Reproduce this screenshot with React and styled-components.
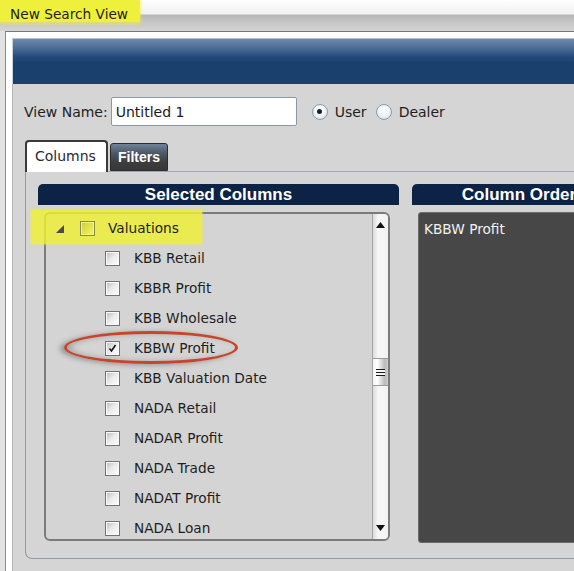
import React from 'react';
import styled, { createGlobalStyle } from 'styled-components';

const Global = createGlobalStyle`
  html, body { margin: 0; padding: 0; }
  body {
    background: #e2e2e2;
    font-family: "DejaVu Sans", Verdana, sans-serif;
    overflow: hidden;
  }
`;

const Screen = styled.div`
  width: 574px;
  height: 571px;
  overflow: hidden;
  background: #e2e2e2;
`;

const TitleBar = styled.div`
  height: 31px;
  display: flex;
  align-items: flex-start;
  background: linear-gradient(
    to bottom,
    #fefefe 0px,
    #f1f1f1 14px,
    #b6b6b6 15px,
    #c6c6c6 22px,
    #d4d4d4 31px
  );
`;

const TitleMark = styled.div`
  box-sizing: border-box;
  height: 22px;
  padding: 7px 12px 0 10px;
  line-height: 15px;
  font-size: 13.7px;
  color: #1e1e1e;
  background: #eff03c;
  box-shadow: 0 1px 3px 1px rgba(236, 238, 60, 0.65);
`;

const Frame = styled.div`
  margin-left: 5px;
  width: 900px;
  height: 600px;
  box-sizing: border-box;
  border-top: 1px solid #767676;
  border-left: 1px solid #8a8a8a;
  background: #ffffff;
  padding: 6px 0 0 6px;
`;

const BlueBand = styled.div`
  height: 46px;
  box-sizing: border-box;
  border-top: 1px solid #b7c4d2;
  border-left: 1px solid #c9d2dc;
  background: linear-gradient(
    to bottom,
    #6e8aac 0px,
    #4f7098 8px,
    #24497a 18px,
    #1a416d 24px,
    #1a416d 100%
  );
`;

const Content = styled.div`
  height: 520px;
  box-sizing: border-box;
  background: #d5d5d5;
  border-left: 1px solid #b4b4b4;
  padding: 13px 0 0 11px;
`;

const NameRow = styled.div`
  display: flex;
  align-items: center;
  height: 29px;
  font-size: 14px;
  color: #1e1e1e;
`;

const Label = styled.span`
  margin-right: 3px;
`;

const NameInput = styled.div`
  box-sizing: border-box;
  width: 186px;
  height: 29px;
  border: 1px solid #8b98a6;
  border-radius: 2px;
  background: #ffffff;
  padding-left: 4px;
  display: flex;
  align-items: center;
  color: #1a1a1a;
`;

const RadioGroup = styled.div`
  display: flex;
  align-items: center;
  margin-left: 15px;
`;

const Radio = styled.span`
  box-sizing: border-box;
  width: 16px;
  height: 16px;
  border-radius: 50%;
  border: 1px solid #8b9db2;
  background: radial-gradient(circle at 50% 40%, #ffffff 0%, #f3f5f9 45%, #c7d1de 100%);
  display: inline-flex;
  align-items: center;
  justify-content: center;
  &::after {
    content: '';
    width: 5px;
    height: 5px;
    border-radius: 50%;
    background: ${(p) => (p.$checked ? '#1e1e1e' : 'transparent')};
  }
`;

const RadioLabel = styled.span`
  margin: 0 9px 0 7px;
`;

const TabRow = styled.div`
  display: flex;
  align-items: flex-end;
  margin-top: 14px;
  padding-left: 1px;
  height: 32px;
  position: relative;
  z-index: 1;
  margin-bottom: -1px;
`;

const Tab = styled.div`
  box-sizing: border-box;
  display: flex;
  align-items: center;
  ${(p) =>
    p.$active
      ? `
    width: 83px;
    height: 32px;
    padding: 0 0 2px 8px;
    background: #ffffff;
    border: 2px solid #3a3a3a;
    border-bottom: none;
    border-radius: 4px 4px 0 0;
    color: #2a2a2a;
    font-size: 14px;
  `
      : `
    width: 58px;
    height: 28px;
    margin-left: 2px;
    margin-bottom: 1px;
    padding-left: 7px;
    background: linear-gradient(to bottom, #6f8399 0px, #4d5966 9px, #3d3d3d 18px, #383838 100%);
    border: 1px solid #2c2c2c;
    border-radius: 3px 3px 0 0;
    color: #ffffff;
    font-family: "Liberation Sans", Arial, sans-serif;
    font-weight: bold;
    font-size: 14px;
  `}
`;

const TabPanel = styled.div`
  box-sizing: border-box;
  height: 388px;
  margin-left: 1px;
  border-top: 1px solid #9ca8b4;
  border-left: 1px solid #8d9aa7;
  border-bottom: 1px solid #8d9aa7;
  border-bottom-left-radius: 7px;
  padding: 12px 0 0 12px;
  display: flex;
  gap: 13px;
`;

const Column = styled.div`
  width: ${(p) => p.$width}px;
  flex-shrink: 0;
  display: flex;
  flex-direction: column;
`;

const Header = styled.div`
  height: 21px;
  background: #0d2346;
  border-radius: 5px 5px 0 0;
  color: #ffffff;
  font-family: "Liberation Sans", Arial, sans-serif;
  font-weight: bold;
  font-size: 17px;
  line-height: 21px;
  text-align: center;
  white-space: nowrap;
`;

const ListBox = styled.div`
  position: relative;
  box-sizing: border-box;
  height: 329px;
  margin: 7px 9px 0 6px;
  border: 2px solid #7b7b7b;
  border-radius: 6px;
  background: #d4d4d4;
  display: flex;
`;

const Rows = styled.div`
  position: relative;
  z-index: 1;
  flex: 1;
  overflow: hidden;
  margin-top: -1px;
`;

const Row = styled.div`
  height: 30px;
  display: flex;
  align-items: center;
  font-size: 13.7px;
  color: #1e1e1e;
  padding-left: ${(p) => (p.$child ? 59 : 10)}px;
  gap: ${(p) => (p.$child ? 14 : 0)}px;
  white-space: nowrap;
`;

const Expander = styled.span`
  display: inline-flex;
  width: 8px;
  margin: 1px 16px 0 0;
`;

const Check = styled.span`
  box-sizing: border-box;
  width: 15px;
  height: 15px;
  margin-right: ${(p) => (p.$yellow ? 13 : 0)}px;
  border: 1px solid ${(p) => (p.$yellow ? '#8a8a52' : '#737373')};
  background: ${(p) =>
    p.$yellow
      ? 'linear-gradient(135deg, #c9ca3a 0%, #e6e852 60%, #f2f36a 100%)'
      : 'linear-gradient(135deg, #b9b9b9 0%, #e9e9e9 45%, #ffffff 100%)'};
  box-shadow: inset 0 0 0 1px ${(p) => (p.$yellow ? '#f6f67c' : '#fafafa')};
  display: inline-flex;
  align-items: center;
  justify-content: center;
`;

const Scrollbar = styled.div`
  position: relative;
  z-index: 1;
  width: 15px;
  border-left: 1px solid #a4a4a4;
  border-radius: 0 4px 4px 0;
  background: linear-gradient(to right, #dcdcdc 0%, #f7f7f7 35%, #f1f1f1 100%);
  display: flex;
  flex-direction: column;
`;

const ScrollButton = styled.div`
  height: 22px;
  display: flex;
  align-items: center;
  justify-content: center;
`;

const Track = styled.div`
  flex: 1;
`;

const Thumb = styled.div`
  box-sizing: border-box;
  height: 28px;
  margin-top: ${(p) => p.$offset}px;
  border-top: 1px solid #9a9a9a;
  border-bottom: 1px solid #9a9a9a;
  background: linear-gradient(to right, #f4f4f4 0%, #ffffff 30%, #b9b9b9 80%, #cfcfcf 100%);
  display: flex;
  align-items: center;
  justify-content: center;
`;

const Grip = styled.span`
  width: 9px;
  height: 7px;
  background: repeating-linear-gradient(to bottom, #1c1c1c 0 1px, #f4f4f4 1px 3px);
`;

const OrderPanel = styled.div`
  box-sizing: border-box;
  height: 331px;
  margin: 7px 0 0 6px;
  border: 1px solid #6c6c6c;
  border-radius: 3px 0 0 3px;
  background: #474747;
  padding: 8px 5px;
  color: #f2f2f2;
  font-size: 13.7px;
  line-height: 16px;
`;

const Highlight = styled.div`
  position: absolute;
  z-index: 0;
  left: -15px;
  top: -4px;
  width: 171px;
  height: 34px;
  background: rgba(238, 240, 52, 0.82);
  box-shadow: 0 0 2px 1px rgba(238, 240, 52, 0.5);
  pointer-events: none;
`;

const RedRing = styled.div`
  position: absolute;
  z-index: 2;
  left: 18px;
  top: 117px;
  width: 174px;
  height: 33px;
  box-sizing: border-box;
  border: 3px solid #c5472b;
  border-radius: 50%;
  box-shadow: -4px 1px 5px rgba(70, 70, 70, 0.45), inset 5px 0 5px rgba(70, 70, 70, 0.28);
  pointer-events: none;
`;

const items = [
  'KBB Retail',
  'KBBR Profit',
  'KBB Wholesale',
  'KBBW Profit',
  'KBB Valuation Date',
  'NADA Retail',
  'NADAR Profit',
  'NADA Trade',
  'NADAT Profit',
  'NADA Loan',
];

const Tick = () => (
  <svg width="9" height="9" viewBox="0 0 9 9">
    <path d="M1.5 4.5 L3.5 7 L7.5 1" fill="none" stroke="#111" strokeWidth="1.6" />
  </svg>
);

export default function App() {
  return (
    <>
      <Global />
      <Screen>
        <TitleBar>
          <TitleMark>New Search View</TitleMark>
        </TitleBar>
        <Frame>
          <BlueBand />
          <Content>
            <NameRow>
              <Label>View Name:</Label>
              <NameInput>Untitled 1</NameInput>
              <RadioGroup>
                <Radio $checked />
                <RadioLabel>User</RadioLabel>
                <Radio />
                <RadioLabel>Dealer</RadioLabel>
              </RadioGroup>
            </NameRow>
            <TabRow>
              <Tab $active>Columns</Tab>
              <Tab>Filters</Tab>
            </TabRow>
            <TabPanel>
              <Column $width={361}>
                <Header>Selected Columns</Header>
                <ListBox>
                  <Highlight />
                  <Rows>
                    <Row>
                      <Expander>
                        <svg width="8" height="8" viewBox="0 0 8 8">
                          <polygon points="8,0 8,8 0,8" fill="#4a4a4a" />
                        </svg>
                      </Expander>
                      <Check $yellow />
                      <span>Valuations</span>
                    </Row>
                    {items.map((t) => (
                      <Row $child key={t}>
                        <Check>{t === 'KBBW Profit' && <Tick />}</Check>
                        <span>{t}</span>
                      </Row>
                    ))}
                  </Rows>
                  <Scrollbar>
                    <ScrollButton>
                      <svg width="9" height="6" viewBox="0 0 9 6">
                        <polygon points="4.5,0 9,6 0,6" fill="#111" />
                      </svg>
                    </ScrollButton>
                    <Track>
                      <Thumb $offset={122}>
                        <Grip />
                      </Thumb>
                    </Track>
                    <ScrollButton>
                      <svg width="9" height="6" viewBox="0 0 9 6">
                        <polygon points="0,0 9,0 4.5,6" fill="#111" />
                      </svg>
                    </ScrollButton>
                  </Scrollbar>
                  <RedRing />
                </ListBox>
              </Column>
              <Column $width={214}>
                <Header>Column Order</Header>
                <OrderPanel>KBBW Profit</OrderPanel>
              </Column>
            </TabPanel>
          </Content>
        </Frame>
      </Screen>
    </>
  );
}
